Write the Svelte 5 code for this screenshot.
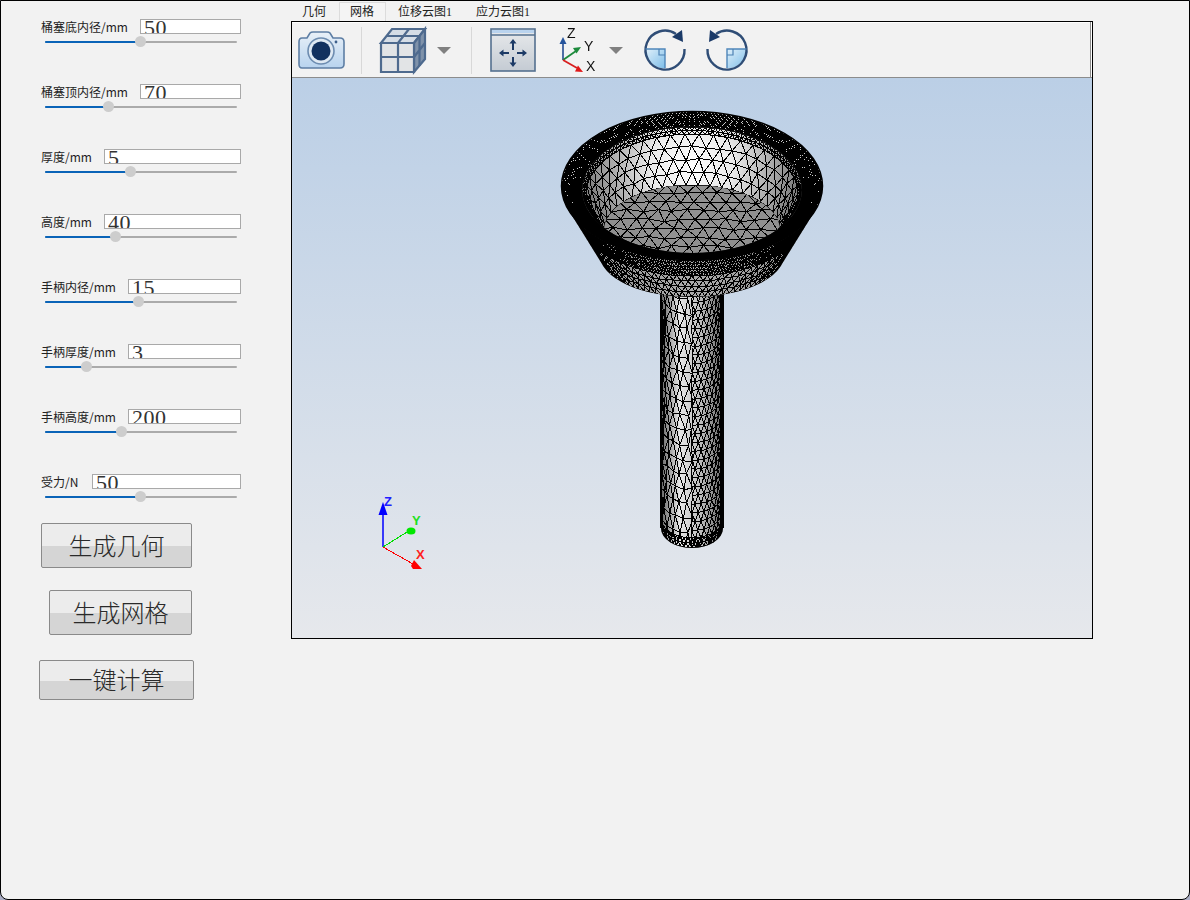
<script>
	const fields = [
		{ label: '桶塞底内径/mm', value: '50', inputLeft: 140, thumb: 140 },
		{ label: '桶塞顶内径/mm', value: '70', inputLeft: 140, thumb: 108 },
		{ label: '厚度/mm', value: '5', inputLeft: 104, thumb: 130 },
		{ label: '高度/mm', value: '40', inputLeft: 104, thumb: 115 },
		{ label: '手柄内径/mm', value: '15', inputLeft: 128, thumb: 138 },
		{ label: '手柄厚度/mm', value: '3', inputLeft: 128, thumb: 86 },
		{ label: '手柄高度/mm', value: '200', inputLeft: 128, thumb: 121 },
		{ label: '受力/N', value: '50', inputLeft: 92, thumb: 140 }
	];

	const tabs = ['几何', '网格', '位移云图1', '应力云图1'];

	// small seeded random so the mesh looks the same on every run
	let seed = 7;
	function rnd(amount) {
		seed = (seed * 16807) % 2147483647;
		return ((seed / 2147483647) * 2 - 1) * amount;
	}

	// triangulated band between two ellipses, rows are staggered like a surface mesh
	function band(a, b, from, to, segs, rows, jitter = 0) {
		let d = '';
		const pts = [];
		for (let r = 0; r <= rows; r++) {
			const row = [];
			const t = r / rows;
			for (let s = 0; s <= segs; s++) {
				const shift = r % 2 ? 0.5 : 0;
				const ang = from + ((to - from) * Math.min(s + shift, segs)) / segs;
				const j = r > 0 && r < rows ? jitter : 0;
				const cx = a.cx + (b.cx - a.cx) * t;
				const cy = a.cy + (b.cy - a.cy) * t;
				const rx = a.rx + (b.rx - a.rx) * t;
				const ry = a.ry + (b.ry - a.ry) * t;
				row.push([
					(cx + rx * Math.cos(ang) + rnd(j)).toFixed(1),
					(cy + ry * Math.sin(ang) + rnd(j)).toFixed(1)
				]);
			}
			pts.push(row);
		}
		for (let r = 0; r <= rows; r++) {
			d += 'M' + pts[r].map((p) => p.join(' ')).join('L');
			if (r === rows) break;
			for (let s = 0; s <= segs; s++) {
				d += `M${pts[r][s].join(' ')}L${pts[r + 1][s].join(' ')}`;
				const next = r % 2 ? s + 1 : s - 1;
				if (next >= 0 && next <= segs) d += `M${pts[r][s].join(' ')}L${pts[r + 1][next].join(' ')}`;
			}
		}
		return d;
	}

	// flat staggered triangles for the bottom of the cup
	function sheet(x0, y0, x1, y1, dx, dy, jitter) {
		const rows = [];
		for (let y = y0, r = 0; y <= y1; y += dy, r++) {
			const row = [];
			for (let x = x0 + (r % 2 ? dx / 2 : 0); x <= x1; x += dx) {
				row.push([(x + rnd(jitter)).toFixed(1), (y + rnd(jitter)).toFixed(1)]);
			}
			rows.push(row);
		}
		let d = '';
		rows.forEach((row, r) => {
			d += 'M' + row.map((p) => p.join(' ')).join('L');
			const below = rows[r + 1];
			if (!below) return;
			row.forEach((p, s) => {
				if (below[s]) d += `M${p.join(' ')}L${below[s].join(' ')}`;
				const n = r % 2 ? s + 1 : s - 1;
				if (below[n]) d += `M${p.join(' ')}L${below[n].join(' ')}`;
			});
		});
		return d;
	}

	const outer = { cx: 692, cy: 186, rx: 130.5, ry: 74.5 };
	const inner = { cx: 692, cy: 190, rx: 110, ry: 63 };
	const wallMid = { cx: 692, cy: 194, rx: 106, ry: 60 };
	const floor = { cx: 692, cy: 230, rx: 88, ry: 45 };
	const coneMid = { cx: 692, cy: 215, rx: 114.6, ry: 61 };
	const coneEnd = { cx: 692, cy: 255, rx: 92, ry: 42 };
	const stemTop = { cx: 692, cy: 265, rx: 31, ry: 20 };
	const stemEnd = { cx: 692, cy: 528, rx: 31, ry: 20 };

	const PI = Math.PI;
	const rimMesh = band(outer, inner, 0, 2 * PI, 290, 7);
	const wallFine = band(inner, wallMid, 0, 2 * PI, 130, 2);
	const wallMesh = band(wallMid, floor, PI, 2 * PI, 23, 4, 1.2) + band(wallMid, floor, 0, PI, 30, 3, 1);
	const floorMesh = sheet(590, 184, 800, 280, 15, 9, 1.8);
	const coneMesh =
		band(outer, coneMid, 0, PI, 110, 5, 0.3) +
		band(coneMid, coneEnd, 0, PI, 46, 4, 0.6);
	const stemMesh =
		band(stemTop, stemEnd, PI * 0.5, PI, 6, 18, 1.5) +
		band(stemTop, stemEnd, PI * 0.12, PI * 0.5, 6, 30, 0.3) +
		band(stemTop, stemEnd, 0, PI * 0.12, 3, 40) +
		band({ ...stemEnd, cy: 518 }, stemEnd, 0, PI, 24, 2);

	function ell(e) {
		return `M${e.cx - e.rx} ${e.cy}a${e.rx} ${e.ry} 0 1 0 ${2 * e.rx} 0a${e.rx} ${e.ry} 0 1 0 ${-2 * e.rx} 0z`;
	}

	// union of ellipses from the rim down to the end of the cone
	let coneFill = '';
	for (let i = 0; i <= 40; i++) {
		const t = i / 40;
		coneFill += ell({
			cx: 692,
			cy: outer.cy + (coneEnd.cy - outer.cy) * t,
			rx: outer.rx + (coneEnd.rx - outer.rx) * t,
			ry: outer.ry + (coneEnd.ry - outer.ry) * t
		});
	}
</script>

<div class="window">
	<aside class="side">
		{#each fields as f}
			<div class="field">
				<div class="field-top">
					<span class="field-label">{f.label}</span>
					<input class="field-input" style="left: {f.inputLeft}px; width: {241 - f.inputLeft}px" value={f.value} readonly />
				</div>
				<div class="slider">
					<div class="slider-fill" style="width: {f.thumb - 45}px"></div>
					<div class="slider-thumb" style="left: {f.thumb - 45 - 5}px"></div>
				</div>
			</div>
		{/each}
		<button class="action action-geo">生成几何</button>
		<button class="action action-mesh">生成网格</button>
		<button class="action action-run">一键计算</button>
	</aside>

	<main class="work">
		<div class="tabs">
			{#each tabs as tab, i}
				<div class="tab" class:active={i === 1}>{tab}</div>
			{/each}
		</div>
		<div class="viewer">
			<div class="toolbar">
				<svg class="tool camera" width="46" height="40" viewBox="0 0 46 40">
					<defs>
						<linearGradient id="camBody" x1="0" y1="0" x2="0" y2="1">
							<stop offset="0" stop-color="#e8f0f8" />
							<stop offset="1" stop-color="#b8d3ee" />
						</linearGradient>
					</defs>
					<path d="M4 8h5l3-5q1-1 3-1h14q2 0 3 1l3 5h7q4 0 4 4v22q0 4-4 4H4q-3 0-3-4V12q0-4 3-4z" fill="url(#camBody)" stroke="#5d7ea4" stroke-width="1.6" />
					<circle cx="23" cy="21" r="13" fill="#dfe9f3" stroke="#6d8cb0" stroke-width="1.6" />
					<circle cx="23" cy="21" r="9.500" fill="#12315f" />
					<circle cx="38" cy="12" r="1.4" fill="#3c5f8c" />
				</svg>
				<div class="sep sep-a"></div>
				<svg class="tool cube" width="46" height="46" viewBox="0 0 46 46">
					<path d="M1 16L12 2h33L34 16z" fill="#d5dde6" stroke="#4e6a8e" stroke-width="2.200" />
					<path d="M34 16L45 2v30L34 45z" fill="#7f92aa" stroke="#4e6a8e" stroke-width="2.200" />
					<path d="M1 16h33v29H1z" fill="#e2e4e6" stroke="#4e6a8e" stroke-width="2.200" />
					<path d="M1 30h33M18 16v29M39.500 9v30M34 30l11-14M7 9h33M29 2L18 16" fill="none" stroke="#4e6a8e" stroke-width="2.200" />
				</svg>
				<span class="caret caret-a"></span>
				<div class="sep sep-b"></div>
				<svg class="tool fit" width="46" height="44" viewBox="0 0 46 44">
					<defs>
						<linearGradient id="fitBody" x1="0" y1="0" x2="0" y2="1">
							<stop offset="0" stop-color="#e8eaec" />
							<stop offset="1" stop-color="#c4cbd3" />
						</linearGradient>
					</defs>
					<rect x="1" y="1" width="44" height="42" fill="url(#fitBody)" stroke="#54708f" stroke-width="1.6" />
					<rect x="2" y="2" width="42" height="3" fill="#b9d3ee" />
					<path d="M1 7h44" stroke="#54708f" stroke-width="1.4" />
					<path d="M23 15v7M23 29v7M12 25h7M27 25h7" stroke="#1c3a66" stroke-width="2" fill="none" />
					<path d="M23 11l-3.500 4.500h7zM23 39l-3.500-4.500h7zM9 25l4.500-3.500v7zM37 25l-4.500-3.500v7z" fill="#1c3a66" />
				</svg>
				<svg class="tool triad" width="40" height="48" viewBox="0 0 40 48">
					<path d="M3 33V15" stroke="#3c5f9c" stroke-width="1.800" />
					<path d="M3 10l-3.500 7h7z" fill="#26549c" />
					<path d="M3 33L16 24" stroke="#1d8a3c" stroke-width="1.800" />
					<path d="M21 20l-8 1 3.500 5.500z" fill="#1d8a3c" />
					<path d="M3 33l14 8" stroke="#d81f1f" stroke-width="1.800" />
					<path d="M23 45l-8-.5 3-6z" fill="#e01818" />
					<text x="7" y="10.500" class="triad-label">Z</text>
					<text x="24" y="23.500" class="triad-label">Y</text>
					<text x="26" y="43.500" class="triad-label">X</text>
				</svg>
				<span class="caret caret-b"></span>
				<svg class="tool rotate-a" width="42" height="42" viewBox="0 0 42 42">
					<defs>
						<linearGradient id="rotFill" x1="0" y1="0" x2="1" y2="1">
							<stop offset="0" stop-color="#e0f0fa" />
							<stop offset="1" stop-color="#7dbde8" />
						</linearGradient>
					</defs>
					<path d="M1.500 21a19.500 19.500 0 0 0 19.500 19.500V21z" fill="url(#rotFill)" />
					<path d="M32 6A19.500 19.500 0 1 0 40.500 21" fill="none" stroke="#2f4d76" stroke-width="2.400" />
					<path d="M1.500 21H21v19" fill="none" stroke="#4f86ba" stroke-width="1.400" />
					<path d="M15 21v6h6" fill="none" stroke="#4d81b3" stroke-width="1.200" />
					<path d="M39 14L38 2 28 9z" fill="#1b3a68" />
				</svg>
				<svg class="tool rotate-b" width="42" height="42" viewBox="0 0 42 42">
					<path d="M40.500 21a19.500 19.500 0 0 1-19.500 19.500V21z" fill="url(#rotFill)" />
					<path d="M10 6A19.500 19.500 0 1 1 1.500 21" fill="none" stroke="#2f4d76" stroke-width="2.400" />
					<path d="M40.500 21H21v19" fill="none" stroke="#4f86ba" stroke-width="1.400" />
					<path d="M27 21v6h-6" fill="none" stroke="#4d81b3" stroke-width="1.200" />
					<path d="M3 14L4 2 14 9z" fill="#1b3a68" />
				</svg>
			</div>
			<div class="scene">
				<svg class="model" width="800" height="560" viewBox="292 78 800 560">
					<defs>
						<linearGradient id="stemShade" x1="0" y1="0" x2="1" y2="0">
							<stop offset="0" stop-color="#666" />
							<stop offset="0.3" stop-color="#e6e6e6" />
							<stop offset="0.65" stop-color="#bbb" />
							<stop offset="1" stop-color="#666" />
						</linearGradient>
						<linearGradient id="coneShade" x1="0" y1="0" x2="1" y2="0">
							<stop offset="0" stop-color="#8a8a8a" />
							<stop offset="0.5" stop-color="#ababab" />
							<stop offset="1" stop-color="#8a8a8a" />
						</linearGradient>
						<radialGradient id="wallShade" gradientUnits="userSpaceOnUse" cx="692" cy="165" r="105">
							<stop offset="0" stop-color="#fff" />
							<stop offset="0.4" stop-color="#eaeaea" />
							<stop offset="1" stop-color="#808080" />
						</radialGradient>
						<clipPath id="innerClip"><path d={ell(inner)} /></clipPath>
						<clipPath id="rimClip"><path d={ell(outer)} /></clipPath>
						<clipPath id="floorClip"><path d={ell(floor)} /></clipPath>
						<clipPath id="coneClip"><path d={coneFill} /></clipPath>
						<clipPath id="stemClip">
							<path d="M661 260H723V528A31 20 0 0 1 661 528z" />
						</clipPath>
					</defs>

					<g clip-path="url(#stemClip)">
						<rect x="661" y="260" width="62" height="290" fill="url(#stemShade)" />
						<path d={stemMesh} class="wire" />
					</g>
					<path d="M661 290V528M723 290V528" stroke="#000" stroke-width="2" shape-rendering="crispEdges" />

					<path d={coneFill} fill="url(#coneShade)" />
					<g clip-path="url(#coneClip)"><path d={coneMesh} class="wire" /></g>

					<path d={ell(outer)} fill="#c8c8c8" />
					<g clip-path="url(#rimClip)"><path d={rimMesh} class="wire" /></g>
					<path d={ell(outer)} fill="none" stroke="#000" stroke-width="1.500" />

					<path d={ell(inner)} fill="url(#wallShade)" />
					<g clip-path="url(#innerClip)">
						<path d={wallMesh} class="wire" />
						<path d={wallFine} class="wire" />
						<path d={ell(floor)} fill="#909090" />
						<g clip-path="url(#floorClip)"><path d={floorMesh} class="wire" /></g>
					</g>
					<path d={ell({ ...inner, rx: 110.500, ry: 63.500 })} fill="none" stroke="#000" stroke-width="1" />

					<!-- orientation triad, lower left of the view -->
					<path d="M383 547V512" stroke="#0000ff" stroke-width="1.500" />
					<path d="M383 502l-4.500 13h9z" fill="#0000ff" />
					<path d="M383 547L407 532" stroke="#00e000" shape-rendering="crispEdges" />
					<ellipse cx="411" cy="531" rx="4.500" ry="3.500" fill="#00e800" />
					<path d="M383 547L413 564" stroke="#ff0000" shape-rendering="crispEdges" />
					<path d="M414 560l-3 6 2 3 9 0z" fill="#ff0000" />
					<text x="384" y="506" class="axis" fill="#2020ff">Z</text>
					<text x="412" y="525" class="axis" fill="#20e020">Y</text>
					<text x="416" y="559" class="axis" fill="#ff2020">X</text>
				</svg>
			</div>
		</div>
	</main>
</div>

<style>
	:global(body) {
		background: #a9adc4;
	}

	.window {
		box-sizing: border-box;
		display: flex;
		width: 1190px;
		height: 900px;
		background: #f2f2f2;
		border: 1px solid #000;
		border-radius: 0 0 8px 8px;
		font-family: 'Noto Sans CJK SC', 'Liberation Sans', sans-serif;
		color: #222;
		overflow: hidden;
	}

	.side {
		box-sizing: border-box;
		flex: 0 0 290px;
		padding-top: 18px;
		display: flex;
		flex-direction: column;
		align-items: flex-start;
	}

	.field {
		position: relative;
		width: 240px;
		height: 65px;
	}

	.field-top {
		height: 15px;
	}

	.field-label {
		position: absolute;
		left: 40px;
		top: 0;
		font-size: 12px;
		line-height: 15px;
		white-space: nowrap;
	}

	.field-input {
		position: absolute;
		top: 0;
		box-sizing: border-box;
		height: 15px;
		margin: 0;
		padding: 2px 0 0 3px;
		background: #fff;
		border: 1px solid #a9a9a9;
		border-radius: 0;
		outline: none;
		font-family: 'Liberation Serif', serif;
		font-size: 22px;
		letter-spacing: 0.5px;
		color: #333;
		transform: translateX(-1px);
	}

	.slider {
		position: absolute;
		left: 44px;
		top: 22px;
		width: 192px;
		height: 2px;
		background: #ababab;
		border-radius: 1px;
	}

	.slider-fill {
		height: 2px;
		background: #0a64b8;
		border-radius: 1px;
	}

	.slider-thumb {
		position: absolute;
		top: -5px;
		width: 11px;
		height: 11px;
		border-radius: 50%;
		background: #cdcdcd;
	}

	.action {
		box-sizing: border-box;
		height: 45px;
		padding: 0 0 3px;
		background: linear-gradient(#ececec 0 52%, #d5d5d5 52% 100%);
		border: 1px solid #8a8a8a;
		border-radius: 2px;
		font-family: 'Noto Sans CJK SC', sans-serif;
		font-size: 24px;
		font-weight: 300;
		color: #2a2a2a;
	}

	.action-geo {
		width: 151px;
		margin: -16px 0 0 40px;
	}

	.action-mesh {
		width: 143px;
		margin: 22px 0 0 48px;
	}

	.action-run {
		width: 155px;
		height: 40px;
		margin: 25px 0 0 38px;
	}

	.work {
		flex: none;
		width: 802px;
	}

	.tabs {
		display: flex;
		height: 20px;
		margin-left: -1px;
		font-family: 'Liberation Serif', 'Noto Sans CJK SC', serif;
		font-size: 12px;
		line-height: 21px;
	}

	.tab {
		padding: 0 11px;
		white-space: nowrap;
		border: 1px solid transparent;
		border-bottom: none;
	}

	.tab.active {
		background: #f4f4f4;
		border-color: #dcdcdc;
		padding: 0 11px 0 10px;
		margin: 1px 0 0 1px;
		line-height: 19px;
	}

	.viewer {
		box-sizing: border-box;
		width: 802px;
		height: 618px;
		border: 1px solid #000;
		display: flex;
		flex-direction: column;
	}

	.toolbar {
		position: relative;
		flex: none;
		height: 56px;
		background: #f2f2f2;
		border-bottom: 1px solid #8c8c8c;
		box-sizing: border-box;
		box-shadow: inset -1px 0 #fff, inset -2px 0 #8c8c8c, inset 0 1px #fff;
	}

	.tool {
		position: absolute;
		filter: blur(0.4px);
		overflow: visible;
	}

	.camera { left: 6px; top: 8px; }
	.cube { left: 88px; top: 5px; }
	.fit { left: 198px; top: 6px; }
	.triad { left: 268px; top: 5px; }
	.rotate-a { left: 352px; top: 6px; }
	.rotate-b { left: 414px; top: 6px; }

	.sep {
		position: absolute;
		top: 5px;
		width: 1px;
		height: 47px;
		background: #d8d8d8;
	}

	.sep-a { left: 69px; }
	.sep-b { left: 179px; }

	.caret {
		position: absolute;
		top: 25px;
		width: 0;
		height: 0;
		border-left: 7px solid transparent;
		border-right: 7px solid transparent;
		border-top: 7px solid #808080;
	}

	.caret-a { left: 145px; }
	.caret-b { left: 317px; }

	.triad-label {
		font-family: 'Liberation Sans', sans-serif;
		font-size: 14px;
		fill: #111;
	}

	.scene {
		flex: 1;
		min-height: 0;
		background: linear-gradient(#bbcfe6, #e6e8ec);
	}

	.model {
		display: block;
	}

	.wire {
		fill: none;
		stroke: #000;
		stroke-width: 1;
		shape-rendering: crispEdges;
	}

	.axis {
		font-family: 'Liberation Sans', sans-serif;
		font-size: 13px;
		font-weight: 700;
	}
</style>
